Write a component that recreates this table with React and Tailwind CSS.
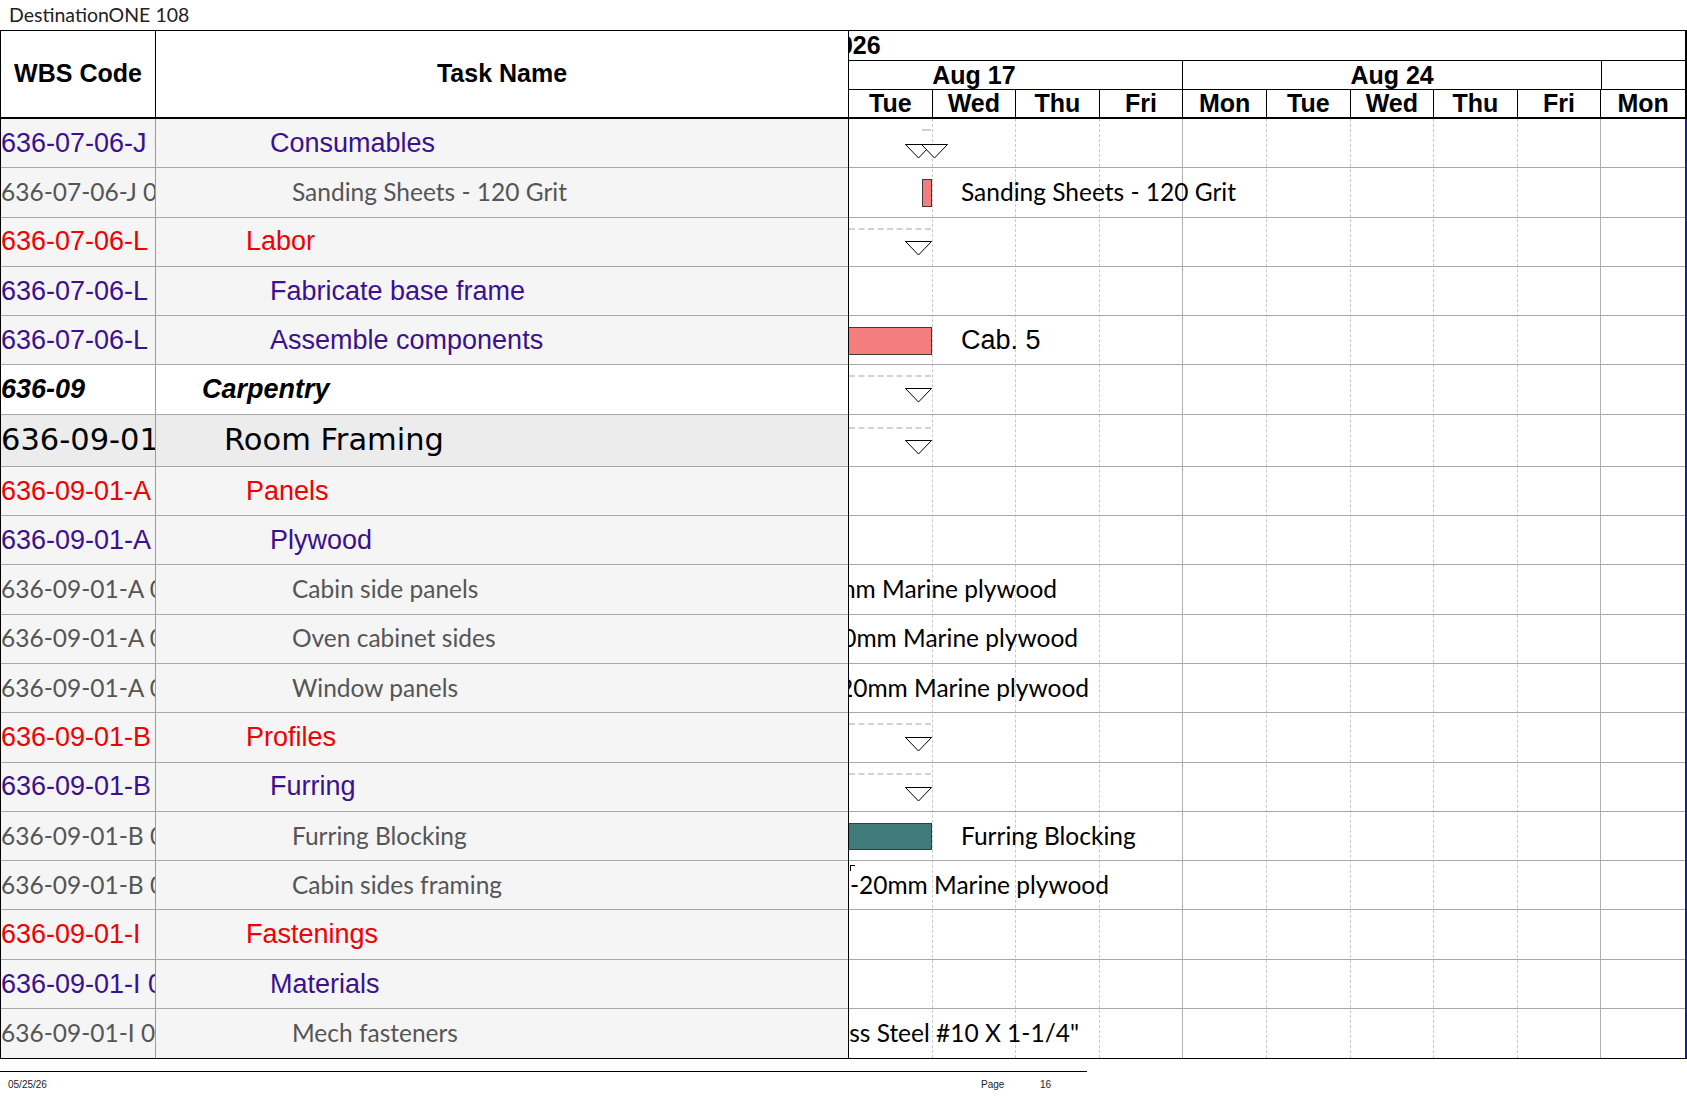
import React from "react";

const ARIAL = "font-['Liberation_Sans',Arial,sans-serif]";
const CAL = "font-['Lato',sans-serif]";
const TAH = "font-['DejaVu_Sans',sans-serif]";

const rows = [
  { code: "636-07-06-J 01", name: "Consumables", type: "purple", indent: "pl-[114px]" },
  { code: "636-07-06-J 01.01", name: "Sanding Sheets - 120 Grit", type: "gray", indent: "pl-[136px]" },
  { code: "636-07-06-L", name: "Labor", type: "red", indent: "pl-[90px]" },
  { code: "636-07-06-L", name: "Fabricate base frame", type: "purple", indent: "pl-[114px]" },
  { code: "636-07-06-L", name: "Assemble components", type: "purple", indent: "pl-[114px]" },
  { code: "636-09", name: "Carpentry", type: "bold", indent: "pl-[46px]" },
  { code: "636-09-01", name: "Room Framing", type: "big", indent: "pl-[68px]" },
  { code: "636-09-01-A", name: "Panels", type: "red", indent: "pl-[90px]" },
  { code: "636-09-01-A", name: "Plywood", type: "purple", indent: "pl-[114px]" },
  { code: "636-09-01-A 01", name: "Cabin side panels", type: "gray", indent: "pl-[136px]" },
  { code: "636-09-01-A 02", name: "Oven cabinet sides", type: "gray", indent: "pl-[136px]" },
  { code: "636-09-01-A 03", name: "Window panels", type: "gray", indent: "pl-[136px]" },
  { code: "636-09-01-B", name: "Profiles", type: "red", indent: "pl-[90px]" },
  { code: "636-09-01-B", name: "Furring", type: "purple", indent: "pl-[114px]" },
  { code: "636-09-01-B 01", name: "Furring Blocking", type: "gray", indent: "pl-[136px]" },
  { code: "636-09-01-B 02", name: "Cabin sides framing", type: "gray", indent: "pl-[136px]" },
  { code: "636-09-01-I", name: "Fastenings", type: "red", indent: "pl-[90px]" },
  { code: "636-09-01-I 01", name: "Materials", type: "purple", indent: "pl-[114px]" },
  { code: "636-09-01-I 01.01", name: "Mech fasteners", type: "gray", indent: "pl-[136px]" },
];

const textStyle = {
  purple: `${ARIAL} text-[27px] text-[#3c108e]`,
  red: `${ARIAL} text-[27px] text-[#f00000]`,
  gray: `${CAL} text-[24.5px] text-[#555555]`,
  bold: `${ARIAL} text-[27px] font-bold italic text-black`,
  big: `${TAH} text-[30.5px] text-black`,
};

const rowBg = {
  purple: "bg-[#f5f5f5]",
  red: "bg-[#f5f5f5]",
  gray: "bg-[#f5f5f5]",
  bold: "bg-white",
  big: "bg-[#ececec]",
};

const CH_W = 836;
const X = (abs) => abs - 849;

function Tri({ x, dy }) {
  return (
    <svg className="absolute" style={{ left: X(x), top: dy }} width="27" height="15" viewBox="0 0 27 15">
      <polygon points="0.5,0.5 26.5,0.5 13.5,14" fill="white" stroke="black" strokeWidth="1" />
    </svg>
  );
}

function Dash({ dy, x1 = 849, x2 = 931 }) {
  return (
    <div
      className="absolute h-0 border-t-2 border-dashed border-[#d2d2d2]"
      style={{ left: X(x1), width: x2 - x1, top: dy }}
    />
  );
}

function Bar({ dy, x1, x2, h, color }) {
  return (
    <div
      className={`absolute border border-[#3a3a3a] ${color}`}
      style={{ left: X(x1), width: x2 - x1, top: dy, height: h }}
    />
  );
}

function Label({ x, xEnd, children, arial }) {
  const pos = xEnd !== undefined ? { right: CH_W - X(xEnd) } : { left: X(x) };
  return (
    <div
      className={`absolute inset-y-0 flex items-center whitespace-nowrap text-black ${
        arial ? `${ARIAL} text-[27px]` : `${CAL} text-[24.5px]`
      }`}
      style={pos}
    >
      {children}
    </div>
  );
}

const chartItems = {
  0: (
    <>
      <div className="absolute h-[2px] w-[9px] bg-[#d0d0d0]" style={{ left: X(922), top: 10 }} />
      <Tri x={905} dy={25} />
      <Tri x={921} dy={25} />
    </>
  ),
  1: (
    <>
      <Bar dy={10.5} x1={922} x2={932} h={28} color="bg-[#f47e7e]" />
      <Label x={961}>Sanding Sheets - 120 Grit</Label>
    </>
  ),
  2: (
    <>
      <Dash dy={10} />
      <Tri x={905} dy={23} />
    </>
  ),
  4: (
    <>
      <Bar dy={10.5} x1={840} x2={932} h={28} color="bg-[#f47e7e]" />
      <Label x={961} arial>
        Cab. 5
      </Label>
    </>
  ),
  5: (
    <>
      <Dash dy={10} />
      <Tri x={905} dy={23} />
    </>
  ),
  6: (
    <>
      <Dash dy={12} />
      <Tri x={905} dy={25} />
    </>
  ),
  9: <Label xEnd={1057}>12mm Marine plywood</Label>,
  10: <Label xEnd={1078}>10mm Marine plywood</Label>,
  11: <Label xEnd={1089}>20mm Marine plywood</Label>,
  12: (
    <>
      <Dash dy={10} />
      <Tri x={905} dy={24} />
    </>
  ),
  13: (
    <>
      <Dash dy={10} />
      <Tri x={905} dy={24} />
    </>
  ),
  14: (
    <>
      <Bar dy={11} x1={840} x2={932} h={27} color="bg-[#3e7b79]" />
      <Label x={961}>Furring Blocking</Label>
    </>
  ),
  15: (
    <>
      <div className="absolute w-[5px] h-[6px] border-t border-l border-black" style={{ left: X(850), top: 4 }} />
      <Label xEnd={1109}>12-20mm Marine plywood</Label>
    </>
  ),
  18: <Label xEnd={1079}>Stainless Steel #10 X 1-1/4"</Label>,
};

const days = ["Tue", "Wed", "Thu", "Fri", "Mon", "Tue", "Wed", "Thu", "Fri", "Mon"];

export default function App() {
  return (
    <div className="w-[1687px] h-[1097px] bg-white overflow-hidden">
      {/* title */}
      <div className={`h-[30px] pl-[9px] flex items-center ${CAL} text-[19.5px] text-[#222]`}>
        DestinationONE 108
      </div>

      {/* main table */}
      <div className="flex border-t border-b border-black">
        {/* left grid */}
        <div className="w-[848px] border-l border-black flex flex-col">
          <div className="h-[88px] flex border-b-2 border-black bg-white">
            <div
              className={`w-[155px] border-r border-black flex items-center justify-center ${ARIAL} text-[25px] font-bold`}
            >
              WBS Code
            </div>
            <div className={`flex-1 flex items-center justify-center ${ARIAL} text-[25px] font-bold`}>Task Name</div>
          </div>
          {rows.map((r, i) => (
            <div
              key={i}
              className={`flex ${rowBg[r.type]} ${r.type === "big" ? "h-[52px]" : "h-[49.3px]"} ${
                i === rows.length - 1 ? "" : "border-b border-[#a8a8a8]"
              }`}
            >
              <div
                className={`w-[155px] shrink-0 border-r border-[#9c9c9c] overflow-hidden whitespace-nowrap flex items-center ${textStyle[r.type]}`}
              >
                {r.code}
              </div>
              <div className={`flex-1 flex items-center whitespace-nowrap ${r.indent} ${textStyle[r.type]}`}>
                {r.name}
              </div>
            </div>
          ))}
        </div>

        {/* gantt chart */}
        <div className="w-[839px] border-l border-black flex flex-col">
          <div className="h-[88px] flex flex-col border-r-2 border-black border-b-2 overflow-hidden">
            <div className={`h-[30px] border-b border-black flex items-center ${ARIAL} text-[25px] font-bold`}>
              <span className="ml-[-24px]">2026</span>
            </div>
            <div className={`h-[29px] border-b border-black flex ${ARIAL} text-[25px] font-bold leading-none`}>
              <div className="ml-[-83.6px] w-[418px] shrink-0 border-r border-black flex items-center justify-center">
                Aug 17
              </div>
              <div className="w-[418.4px] shrink-0 border-r border-black flex items-center justify-center">
                Aug 24
              </div>
              <div className="flex-1" />
            </div>
            <div className={`h-[27px] flex ${ARIAL} text-[25px] font-bold leading-none`}>
              {days.map((d, i) => (
                <div
                  key={i}
                  className={`w-[83.6px] shrink-0 flex items-center justify-center ${
                    i < 9 ? "border-r border-black" : ""
                  }`}
                >
                  {d}
                </div>
              ))}
            </div>
          </div>

          <div className="relative flex-1 overflow-hidden border-r-2 border-[#1c1c9c] bg-white">
            <div className="absolute inset-0 flex">
              {days.map((d, i) => (
                <div
                  key={i}
                  className={`w-[83.6px] shrink-0 h-full ${
                    i === 3 || i === 8
                      ? "border-r border-[#b0b0b0]"
                      : i === 9
                      ? ""
                      : "border-r border-dashed border-[#c8c8c8]"
                  }`}
                />
              ))}
            </div>
            {rows.map((r, i) => (
              <div
                key={i}
                className={`relative ${r.type === "big" ? "h-[52px]" : "h-[49.3px]"} ${
                  i === rows.length - 1 ? "" : "border-b border-[#a8a8a8]"
                }`}
              >
                {chartItems[i]}
              </div>
            ))}
          </div>
        </div>
      </div>

      {/* footer */}
      <div className="mt-[12px] w-[1087px] border-t border-black">
        <div className={`flex h-[24px] items-center ${ARIAL} text-[10px] text-[#222]`}>
          <span className="w-[981px] pl-[8px]">05/25/26</span>
          <span className="w-[59px]">Page</span>
          <span>16</span>
        </div>
      </div>
    </div>
  );
}
